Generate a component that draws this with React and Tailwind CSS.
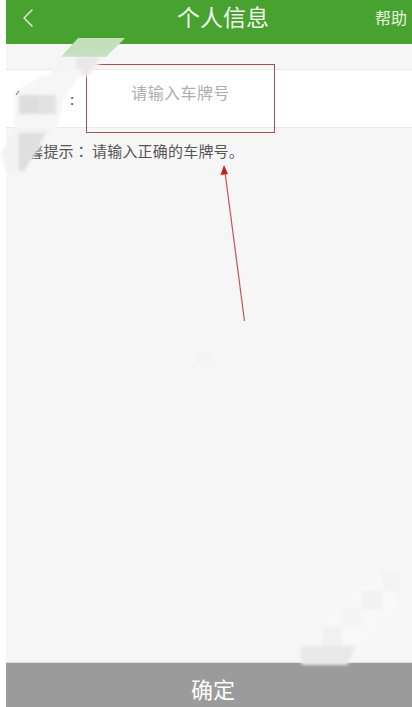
const cjk = { fontFamily: '"Noto Sans CJK SC", "Liberation Sans", sans-serif' };
const jp = { fontFamily: '"Noto Sans CJK JP", sans-serif' };

function Overlay() {
  return (
    <svg className="absolute left-0 top-0 pointer-events-none" width="412" height="707" viewBox="0 0 412 707">
      <defs>
        <filter id="soft" x="-20%" y="-20%" width="140%" height="140%">
          <feGaussianBlur stdDeviation="1.6" />
        </filter>
      </defs>
      <polygon points="78,38 125,38 106,57 61,57" fill="#c4dfbb" />
      <g filter="url(#soft)">
        <polygon points="61,57 106,57 88,76 48,78" fill="#f4f4f4" />
        <polygon points="76,57 100,57 88,75 76,75" fill="#e9e7e9" />
        <polygon points="42,76 84,68 63,100 58,128 36,152 14,128 14,92" fill="#f6f6f6" />
        <polygon points="16,128 50,128 38,150 24,172 6,172 1,152" fill="#f2f2f2" />
        <rect x="19" y="95" width="19" height="19" fill="#dddddd" />
        <rect x="38" y="95" width="18" height="19" fill="#e1e1e1" />
        <polygon points="19,133 46,133 24,171 19,171" fill="#dfdfdf" />
        <polygon points="395,570 400,610 378,625 360,650 352,662 300,662 325,620 355,590" fill="#f8f8f8" />
        <rect x="383" y="571" width="17" height="20" fill="#f3f3f3" />
        <rect x="362" y="590" width="20" height="20" fill="#f2f2f2" />
        <rect x="342" y="607" width="20" height="20" fill="#f4f4f4" />
        <rect x="322" y="627" width="20" height="20" fill="#f1f1f1" />
        <polygon points="302,646 356,646 347,665 302,665 300,655" fill="#e8e8e8" />
        <rect x="195" y="352" width="14" height="14" fill="#f4f4f4" />
      </g>
      <path d="M16 95 L19 91" stroke="#666666" strokeWidth="1" />
    </svg>
  );
}

export default function App() {
  return (
    <div className="relative w-[412px] h-[707px] overflow-hidden bg-white pl-[6px] flex flex-col" style={cjk}>
      <header className="h-[44px] shrink-0 bg-[#48a22f] flex items-center justify-between text-white">
        <svg className="ml-[16px] mb-[8px]" width="12" height="20" viewBox="0 0 12 20" fill="none" stroke="#e4f2df" strokeWidth="1.4">
          <path d="M10.5 1.5 L2 10 L10.5 18.5" />
        </svg>
        <h1 className="text-[23px] leading-none font-normal ml-[37px] mb-[11px] text-[#f2f8ef]">个人信息</h1>
        <span className="text-[16px] leading-none mr-[5px] mb-[11px] text-[#e8f3e4]">帮助</span>
      </header>

      <main className="flex-1 bg-[#f6f6f6] flex flex-col pt-[25px]">
        <div className="h-[59px] bg-white border-y border-[#e9e9e9] flex items-center relative">
          <span className="ml-[64px] text-[15px] leading-none text-[#555555]">:</span>
          <div className="absolute left-[80px] top-[-6px] w-[189px] h-[69px] border-[1.5px] border-[#a2514f] flex items-center justify-center">
            <span className="text-[16px] leading-none text-[#adadad] mb-[14px] tracking-[0.4px]">请输入车牌号</span>
          </div>
        </div>
        <p className="mt-[15px] ml-[7px] text-[15px] leading-none text-[#555555] tracking-[0.2px]">
          温馨提示<span className="mr-[3px]" style={jp}>：</span>请输入正确的车牌号。
        </p>
      </main>

      <button className="h-[45px] shrink-0 bg-[#9b9b9b] border-t border-[#dddddd] text-white text-[22px] leading-none flex items-center justify-center pt-[6px] pl-[8px]">
        确定
      </button>

      <svg className="absolute left-[215px] top-[160px]" width="40" height="170" viewBox="215 160 40 170" fill="none">
        <path d="M244.5 321 L225 172" stroke="#c8505a" strokeWidth="1.2" />
        <polygon points="224,165 228,174 220.5,175" fill="#c81e24" />
      </svg>
      <Overlay />
    </div>
  );
}
